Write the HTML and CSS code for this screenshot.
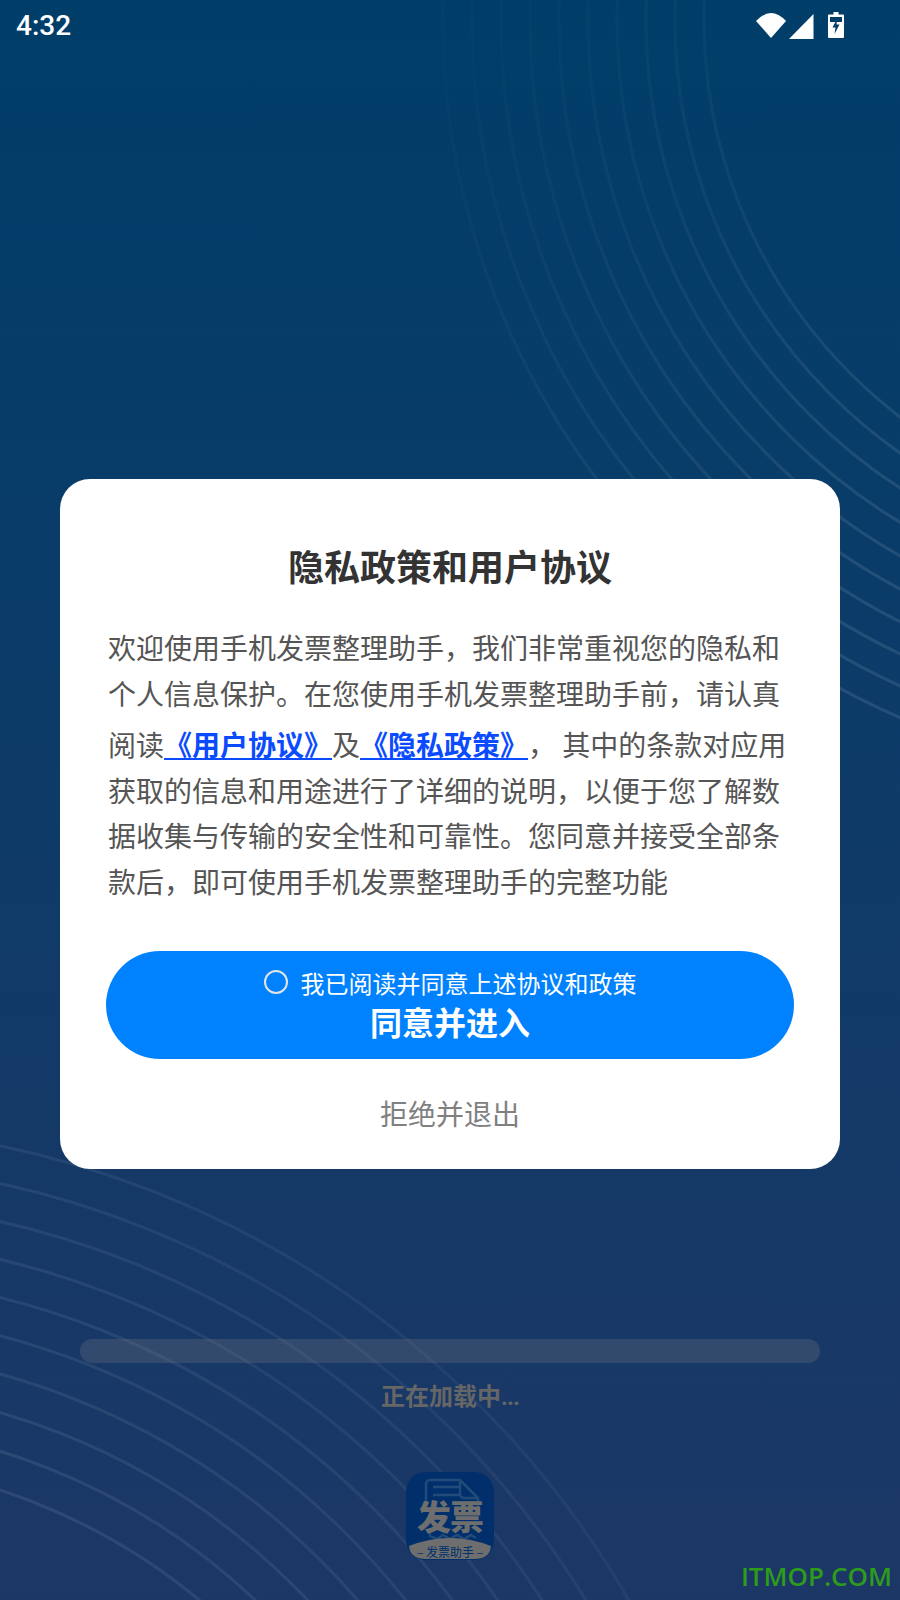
FILE: index.html
```html
<!DOCTYPE html>
<html lang="zh-CN">
<head>
<meta charset="utf-8">
<title>隐私政策和用户协议</title>
<link rel="stylesheet" href="styles.css">
</head>
<body>
<div class="page">
  <svg class="arcs" width="900" height="1600" viewBox="0 0 900 1600" aria-hidden="true">
    <defs>
      <linearGradient id="fadeTop" gradientUnits="userSpaceOnUse" x1="400" y1="150" x2="900" y2="480">
        <stop offset="0" stop-color="#fff" stop-opacity="0.01"/>
        <stop offset="0.45" stop-color="#fff" stop-opacity="0.04"/>
        <stop offset="1" stop-color="#fff" stop-opacity="0.1"/>
      </linearGradient>
      <linearGradient id="fadeBottom" gradientUnits="userSpaceOnUse" x1="40" y1="1600" x2="640" y2="1180">
        <stop offset="0" stop-color="#fff" stop-opacity="0.09"/>
        <stop offset="0.6" stop-color="#fff" stop-opacity="0.05"/>
        <stop offset="1" stop-color="#fff" stop-opacity="0"/>
      </linearGradient>
    </defs>
    <g class="arc-group arc-top">
      <circle cx="1204" cy="20" r="500"/><circle cx="1204" cy="20" r="529"/>
      <circle cx="1204" cy="20" r="558"/><circle cx="1204" cy="20" r="587"/>
      <circle cx="1204" cy="20" r="616"/><circle cx="1204" cy="20" r="645"/>
      <circle cx="1204" cy="20" r="674"/><circle cx="1204" cy="20" r="703"/>
      <circle cx="1204" cy="20" r="732"/><circle cx="1204" cy="20" r="761"/>
    </g>
    <g class="arc-group arc-bottom">
      <circle cx="-193" cy="2075" r="616"/><circle cx="-193" cy="2075" r="653"/>
      <circle cx="-193" cy="2075" r="690"/><circle cx="-193" cy="2075" r="727"/>
      <circle cx="-193" cy="2075" r="764"/><circle cx="-193" cy="2075" r="801"/>
      <circle cx="-193" cy="2075" r="838"/><circle cx="-193" cy="2075" r="875"/>
      <circle cx="-193" cy="2075" r="912"/><circle cx="-193" cy="2075" r="949"/>
    </g>
  </svg>

  <header class="status-bar">
    <span class="time">4:32</span>
    <div class="status-icons">
      <svg class="icon-wifi" width="30" height="25" viewBox="0 0 30 25"><path d="M15 25 0 8Q15-8 30 8Z"/></svg>
      <svg class="icon-signal" width="25" height="25" viewBox="0 0 25 25"><path d="M0 25 24.500 0V25Z"/></svg>
      <svg class="icon-battery" width="16" height="26" viewBox="0 0 16 26"><path fill-rule="evenodd" d="M5.500 0h5v2.500H15a1 1 0 0 1 1 1V25a1 1 0 0 1-1 1H1a1 1 0 0 1-1-1V3.500a1 1 0 0 1 1-1h4.500ZM2 5v5h12V5Z"/><path class="bolt" d="M9 7 4.500 15.500H7.500L6.500 22 11.500 12.500H8.500Z"/></svg>
    </div>
  </header>

  <main class="loading">
    <div class="progress"></div>
    <p class="loading-text">正在加载中<span class="dots">...</span></p>
    <div class="logo">
      <svg class="logo-doc" width="88" height="88" viewBox="0 0 88 88" aria-hidden="true">
        <path class="doc-line" d="M20 34V12a4 4 0 0 1 4-4H54L72 26V38"/>
        <path class="doc-line" d="M54 8V22a4 4 0 0 0 4 4H72M27 15H53M27 23H53"/>
        <path class="doc-line" d="M24 60V64L31 67 37 63 44 67 51 63 58 67 65 63 70 66"/>
        <path class="band" d="M3 74Q44 58 85 74 84 87 68 87H20Q4 87 3 74Z"/>
      </svg>
      <span class="logo-big">发票</span>
      <span class="logo-small">– 发票助手 –</span>
    </div>
  </main>

  <section class="dialog">
    <h1 class="dialog-title">隐私政策和用户协议</h1>
    <div class="dialog-body">
      <span class="line">欢迎使用手机发票整理助手，我们非常重视您的隐私和</span>
      <span class="line">个人信息保护。在您使用手机发票整理助手前，请认真</span>
      <span class="line line-tall">阅读<a class="link">《用户协议》</a>及<a class="link">《隐私政策》</a>， 其中的条款对应用</span>
      <span class="line">获取的信息和用途进行了详细的说明，以便于您了解数</span>
      <span class="line">据收集与传输的安全性和可靠性。您同意并接受全部条</span>
      <span class="line">款后，即可使用手机发票整理助手的完整功能</span>
    </div>
    <button class="agree">
      <span class="agree-check"><span class="radio"></span>我已阅读并同意上述协议和政策</span>
      <span class="agree-main">同意并进入</span>
    </button>
    <div class="refuse">拒绝并退出</div>
  </section>

  <div class="watermark">ITMOP.COM</div>
</div>
</body>
</html>
```

FILE: styles.css
```css
* { box-sizing: border-box; }

html, body { margin: 0; padding: 0; }

body {
  font-family: "Noto Sans CJK SC", "Noto Sans", sans-serif;
  text-spacing-trim: space-all;
}

.page {
  position: relative;
  width: 900px;
  height: 1600px;
  overflow: hidden;
  display: flex;
  flex-direction: column;
  background: linear-gradient(180deg, #003e69 0%, #0a3c69 35%, #1c3766 100%);
}

.arcs { position: absolute; left: 0; top: 0; }
.arc-group { fill: none; stroke-width: 3; }
.arc-top { stroke: url(#fadeTop); }
.arc-bottom { stroke: url(#fadeBottom); }

.status-bar {
  position: relative;
  height: 50px;
  display: flex;
  align-items: center;
  justify-content: space-between;
  padding: 0 56px 0 16px;
  color: #fff;
}

.time {
  padding-top: 1px;
  font-family: Roboto, sans-serif;
  font-weight: 500;
  font-size: 28px;
  line-height: 50px;
}

.status-icons { display: flex; align-items: flex-start; }
.status-icons svg { display: block; fill: #fff; }
.icon-wifi { margin-top: 1px; }
.icon-signal { margin: 2px 0 0 3px; }
.icon-battery { margin-left: 14px; }
.icon-battery .bolt { fill: #023e6a; }

.loading {
  position: relative;
  flex: 1;
  display: flex;
  flex-direction: column;
  align-items: center;
  padding-top: 1289px;
}

.progress {
  width: 740px;
  height: 24px;
  border-radius: 12px;
  background: rgba(128, 128, 128, 0.25);
}

.loading-text {
  margin: 14px 0 0;
  font-size: 24px;
  font-weight: 700;
  line-height: 36px;
  color: #666;
}

.dots {
  font-family: Roboto, sans-serif;
  letter-spacing: -1px;
}

.logo {
  position: relative;
  width: 88px;
  height: 88px;
  margin-top: 57px;
  border-radius: 20px;
  background: #002f6c;
  overflow: hidden;
}

.logo-doc { display: block; }
.doc-line { fill: none; stroke: #234b7a; stroke-width: 2.500; }
.band { fill: #6e6e6e; }

.logo-big {
  position: absolute;
  left: 11px;
  top: 22px;
  font-size: 34px;
  font-weight: 900;
  line-height: 44px;
  letter-spacing: -1px;
  color: #6e6e6e;
  white-space: nowrap;
}

.logo-small {
  position: absolute;
  left: 0;
  right: 0;
  top: 72px;
  text-align: center;
  font-size: 12px;
  line-height: 16px;
  color: #002f6c;
  white-space: nowrap;
}

.dialog {
  position: absolute;
  left: 60px;
  top: 479px;
  width: 780px;
  height: 690px;
  border-radius: 30px;
  background: #fff;
  display: flex;
  flex-direction: column;
  align-items: center;
  padding-top: 60px;
}

.dialog-title {
  margin: 0;
  font-size: 36px;
  font-weight: 700;
  line-height: 52px;
  color: #333;
}

.dialog-body {
  align-self: flex-start;
  margin: 34px 0 0 48px;
  font-size: 28px;
  line-height: 45.600px;
  color: #555;
  white-space: nowrap;
}

.line { display: block; }
.line-tall { margin-top: 6px; }

.link {
  font-weight: 700;
  color: #0a4bff;
  text-decoration: underline;
}

.agree {
  width: 688px;
  height: 108px;
  margin-top: 46.400px;
  border: 0;
  padding: 0;
  border-radius: 54px;
  background: #0082ff;
  color: #fff;
  font-family: inherit;
  display: flex;
  flex-direction: column;
  align-items: center;
  justify-content: flex-start;
}

.agree-check {
  display: flex;
  align-items: center;
  margin-top: 15px;
  font-size: 24px;
  line-height: 33px;
}

.radio {
  width: 24px;
  height: 24px;
  margin-right: 13px;
  border: 2px solid #e4e4e4;
  border-radius: 50%;
}

.agree-main {
  font-size: 32px;
  font-weight: 700;
  line-height: 44px;
}

.refuse {
  margin-top: 32px;
  font-size: 28px;
  line-height: 44px;
  color: #808080;
}

.watermark {
  position: absolute;
  right: 8px;
  top: 1558px;
  font-family: "Open Sans", sans-serif;
  font-size: 26px;
  font-weight: 600;
  line-height: 36px;
  color: #2e9b1a;
}
```
